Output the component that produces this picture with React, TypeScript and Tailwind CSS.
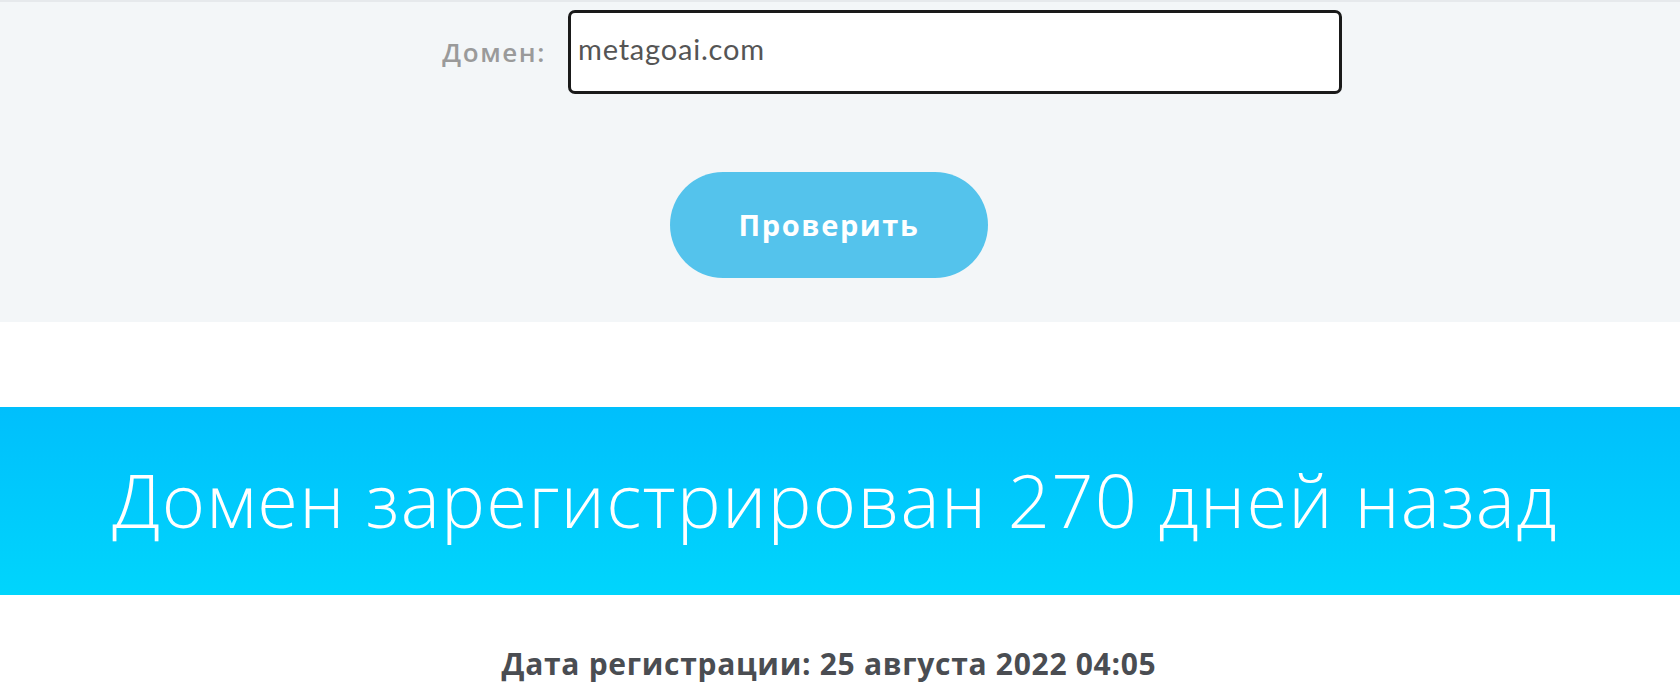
// domain age check page: form on gray, result band, registration date
export default function App() {
    return (
        <div className="w-[1680px] h-[683px] overflow-hidden bg-white" style={{ fontFamily: '"Open Sans", "Noto Sans", sans-serif' }}>
            <section className="h-[322px] bg-[#f3f6f8] border-t-2 border-[#e6e9ec]">
                <div className="flex items-center pt-[8px]">
                    <label className="w-[568px] pr-[22px] text-right text-[26px] font-semibold tracking-[1.6px] text-[#9a9a9a]">Домен:</label>
                    <div className="w-[774px] h-[84px] bg-white border-[3px] border-[#1a1a1a] rounded-[7px] flex items-center pl-[7px]">
                        <span className="text-[29px] text-[#555555] pb-[6px] tracking-[0.8px]" style={{ fontFamily: 'Lato, "Open Sans", sans-serif' }}>metagoai.com</span>
                    </div>
                </div>
                <div className="flex justify-center pr-[22px] mt-[78px]">
                    <button className="w-[318px] h-[106px] rounded-full bg-[#54c3ec] text-white text-[29px] font-bold tracking-[1.6px]">
                        Проверить
                    </button>
                </div>
            </section>
            <div className="h-[85px]" />
            <section className="h-[188px] bg-gradient-to-b from-[#00bffc] to-[#00d5fc] flex items-center justify-center">
                <h1 className="text-[74px] font-light text-white tracking-[1.2px] pb-[4px] pr-[10px]">Домен зарегистрирован 270 дней назад</h1>
            </section>
            <p className="mt-[46px] text-center text-[30px] font-bold tracking-[0.7px] text-[#4a4d52] pr-[22px]">
                Дата регистрации: 25 августа 2022 04:05
            </p>
        </div>
    );
}
